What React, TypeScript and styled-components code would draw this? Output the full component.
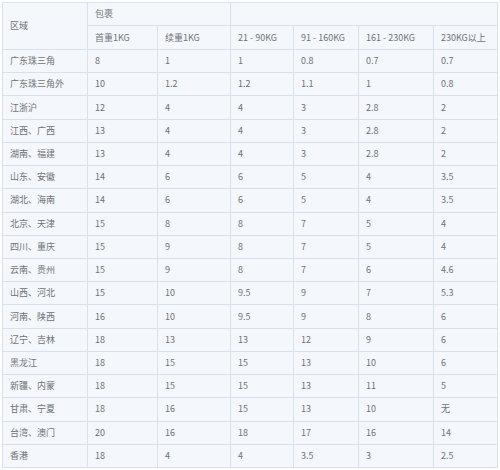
import React from "react";
import styled, { createGlobalStyle } from "styled-components";

const Global = createGlobalStyle`
  html, body { margin: 0; padding: 0; background: #ffffff; }
  body { font-family: "Noto Sans CJK SC", "Noto Sans", sans-serif; }
`;

const Page = styled.div`
  padding: 2px 3px 0 2px;
`;

const Table = styled.table`
  border-collapse: collapse;
  table-layout: fixed;
  width: 495px;
  background: #f4f7fb;
  color: #6e7378;
  font-size: 9px;
  font-weight: 400;
`;

const Cell = styled.td<{ $h?: number }>`
  border: 1px solid #d8e1ec;
  padding: 0 0 0 7px;
  height: ${(p) => p.$h ?? 22}px;
  line-height: 12px;
  text-align: left;
  vertical-align: middle;
  white-space: nowrap;
  overflow: hidden;
  box-sizing: border-box;
`;

const widths = [85, 70, 73, 63, 65, 75, 64];

const subHeads = ["首重1KG", "续重1KG", "21 - 90KG", "91 - 160KG", "161 - 230KG", "230KG以上"];

const rows: string[][] = [
  ["广东珠三角", "8", "1", "1", "0.8", "0.7", "0.7"],
  ["广东珠三角外", "10", "1.2", "1.2", "1.1", "1", "0.8"],
  ["江浙沪", "12", "4", "4", "3", "2.8", "2"],
  ["江西、广西", "13", "4", "4", "3", "2.8", "2"],
  ["湖南、福建", "13", "4", "4", "3", "2.8", "2"],
  ["山东、安徽", "14", "6", "6", "5", "4", "3.5"],
  ["湖北、海南", "14", "6", "6", "5", "4", "3.5"],
  ["北京、天津", "15", "8", "8", "7", "5", "4"],
  ["四川、重庆", "15", "9", "8", "7", "5", "4"],
  ["云南、贵州", "15", "9", "8", "7", "6", "4.6"],
  ["山西、河北", "15", "10", "9.5", "9", "7", "5.3"],
  ["河南、陕西", "16", "10", "9.5", "9", "8", "6"],
  ["辽宁、吉林", "18", "13", "13", "12", "9", "6"],
  ["黑龙江", "18", "15", "15", "13", "10", "6"],
  ["新疆、内蒙", "18", "15", "15", "13", "11", "5"],
  ["甘肃、宁夏", "18", "16", "15", "13", "10", "无"],
  ["台湾、澳门", "20", "16", "18", "17", "16", "14"],
  ["香港", "18", "4", "4", "3.5", "3", "2.5"],
];

export default function App() {
  return (
    <>
      <Global />
      <Page>
        <Table>
          <colgroup>
            {widths.map((w, i) => (
              <col key={i} style={{ width: w }} />
            ))}
          </colgroup>
          <tbody>
            <tr>
              <Cell rowSpan={2} $h={23}>区域</Cell>
              <Cell colSpan={2} $h={23}>包裹</Cell>
              <Cell colSpan={4} $h={23}></Cell>
            </tr>
            <tr>
              {subHeads.map((s) => (
                <Cell key={s} $h={24}>{s}</Cell>
              ))}
            </tr>
            {rows.map((r) => (
              <tr key={r[0]}>
                {r.map((c, i) => (
                  <Cell key={i} $h={23.22}>{c}</Cell>
                ))}
              </tr>
            ))}
          </tbody>
        </Table>
      </Page>
    </>
  );
}
